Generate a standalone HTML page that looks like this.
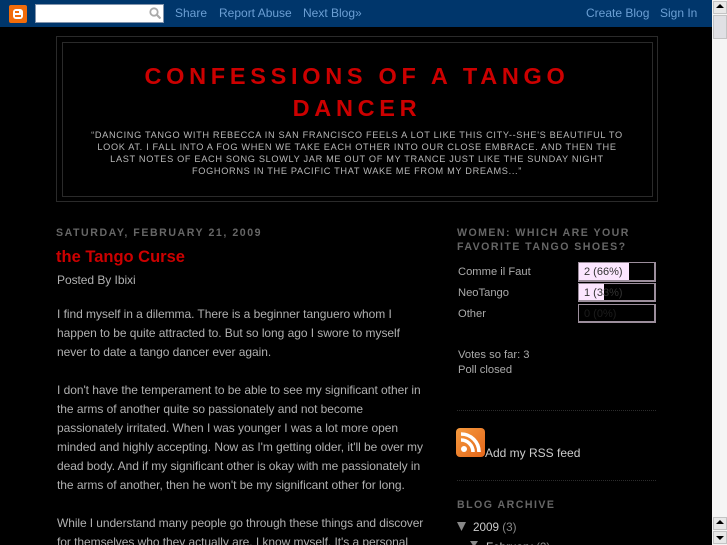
<!DOCTYPE html>
<html><head><meta charset="utf-8">
<style>
html,body{margin:0;padding:0;background:#000;overflow:hidden}
#p{position:relative;width:727px;height:545px;overflow:hidden;background:#000;font-family:"Liberation Sans",sans-serif}
#p div,#p svg{position:absolute}
.t{white-space:nowrap}
.nav{top:6px;font-size:12px;line-height:15px;color:#6b9fd4;letter-spacing:0}
.b{font-size:12px;color:#b0b0b0;left:57px;letter-spacing:-.05px;line-height:19px}
.h{font-weight:bold;font-size:10.6px;color:#666;letter-spacing:1.45px;line-height:14px}
.s{font-size:11.2px;color:#aaa;letter-spacing:0;line-height:15px}
.tag{font-size:9.2px;color:#b8b8b8;letter-spacing:.67px;line-height:12px;left:62px;width:590px;text-align:center}
.title{font-weight:bold;font-size:23.5px;color:#c00;letter-spacing:4.7px;line-height:32px;left:62px;width:590px;text-align:center}
.bar{left:578px;width:78px;height:19px;box-sizing:border-box;border:1px solid #9c8e9c;border-width:1px 2px 2px 1px;background:#000}
.fill{left:0;top:0;height:100%;background:#fce6ff}
.lab{left:5px;top:2px;font-size:11px;line-height:14px;letter-spacing:0;color:#333;white-space:nowrap}
.dot{left:457px;width:199px;height:1px;background:repeating-linear-gradient(90deg,#2c2c2c 0 1px,#000 1px 2px)}
</style></head><body><div id="p">
<div style="left:0;top:0;width:712px;height:27px;background:#00366b"></div>
<div style="left:9px;top:5px;width:18px;height:18px;background:#f26c0a;border-radius:2px"></div>
<div style="left:13px;top:9px;width:10px;height:10px;background:#fff;border-radius:3px"></div>
<div style="left:15px;top:11px;width:4px;height:2px;background:#f26c0a"></div>
<div style="left:15px;top:15px;width:6px;height:2px;background:#f26c0a"></div>
<div style="left:35px;top:4px;width:129px;height:19px;background:#fff;border:1px solid #8294ac;box-sizing:border-box"></div>
<svg style="left:149px;top:7px" width="12" height="12" viewBox="0 0 12 12"><circle cx="5" cy="5" r="3.700" fill="none" stroke="#aaa" stroke-width="1.800"/><path d="M8 8l3.500 3.500" stroke="#aaa" stroke-width="2.200"/></svg>
<div class="t nav" style="left:175px">Share</div>
<div class="t nav" style="left:219px">Report Abuse</div>
<div class="t nav" style="left:303px">Next Blog»</div>
<div class="t nav" style="left:586px">Create Blog</div>
<div class="t nav" style="left:660px">Sign In</div>

<div style="left:712px;top:0;width:15px;height:545px;background:#f5f5f5"></div>
<div style="left:713px;top:1px;width:14px;height:13px;background:#e8e8e8;border:1px solid #c4c4c4;box-sizing:border-box"></div>
<div style="left:713px;top:15px;width:14px;height:24px;background:#e0e0e4;border:1px solid #c4c4c4;box-sizing:border-box"></div>
<div style="left:713px;top:517px;width:14px;height:13px;background:#e8e8e8;border:1px solid #c4c4c4;box-sizing:border-box"></div>
<div style="left:713px;top:531px;width:14px;height:13px;background:#e8e8e8;border:1px solid #c4c4c4;box-sizing:border-box"></div>
<svg style="left:713px;top:0" width="14" height="545" viewBox="0 0 14 545"><path d="M3 8h8L7 4z M3 524h8L7 520z M3 536h8L7 540z" fill="#000"/></svg>

<div style="left:56px;top:36px;width:602px;height:166px;box-sizing:border-box;border:1px solid #2a2a2a"></div>
<div style="left:62px;top:42px;width:591px;height:155px;box-sizing:border-box;border:1px solid #2a2a2a"></div>
<div class="t title" style="top:60px">CONFESSIONS OF A TANGO</div>
<div class="t title" style="top:92px">DANCER</div>
<div class="t tag" style="top:129px">“DANCING TANGO WITH REBECCA IN SAN FRANCISCO FEELS A LOT LIKE THIS CITY--SHE'S BEAUTIFUL TO</div>
<div class="t tag" style="top:141px">LOOK AT. I FALL INTO A FOG WHEN WE TAKE EACH OTHER INTO OUR CLOSE EMBRACE. AND THEN THE</div>
<div class="t tag" style="top:153px">LAST NOTES OF EACH SONG SLOWLY JAR ME OUT OF MY TRANCE JUST LIKE THE SUNDAY NIGHT</div>
<div class="t tag" style="top:165px">FOGHORNS IN THE PACIFIC THAT WAKE ME FROM MY DREAMS...”</div>

<div class="t h" style="left:56px;top:226px;letter-spacing:1.55px">SATURDAY, FEBRUARY 21, 2009</div>
<div class="t" style="left:56px;top:247px;font-size:16.5px;font-weight:bold;color:#c00;line-height:20px">the Tango Curse</div>
<div class="t b" style="top:271px">Posted By Ibixi</div>
<div class="t b" style="top:305px">I find myself in a dilemma. There is a beginner tanguero whom I</div>
<div class="t b" style="top:324px">happen to be quite attracted to. But so long ago I swore to myself</div>
<div class="t b" style="top:343px">never to date a tango dancer ever again.</div>
<div class="t b" style="top:381px">I don't have the temperament to be able to see my significant other in</div>
<div class="t b" style="top:400px">the arms of another quite so passionately and not become</div>
<div class="t b" style="top:419px">passionately irritated. When I was younger I was a lot more open</div>
<div class="t b" style="top:438px">minded and highly accepting. Now as I'm getting older, it'll be over my</div>
<div class="t b" style="top:457px">dead body. And if my significant other is okay with me passionately in</div>
<div class="t b" style="top:476px">the arms of another, then he won't be my significant other for long.</div>
<div class="t b" style="top:514px;letter-spacing:-.09px">While I understand many people go through these things and discover</div>
<div class="t b" style="top:533px">for themselves who they actually are. I know myself. It's a personal</div>

<div class="t h" style="left:457px;top:226px">WOMEN: WHICH ARE YOUR</div>
<div class="t h" style="left:457px;top:240px">FAVORITE TANGO SHOES?</div>
<div class="t s" style="left:458px;top:265px">Comme il Faut</div>
<div class="t s" style="left:458px;top:286px">NeoTango</div>
<div class="t s" style="left:458px;top:307px">Other</div>
<div class="bar" style="top:262px;height:20px"><div class="fill" style="width:50px"></div><div class="lab">2 (66%)</div></div>
<div class="bar" style="top:283px"><div class="fill" style="width:25px"></div><div class="lab">1 (33%)</div></div>
<div class="bar" style="top:304px"><div class="lab" style="color:#1c1c1c">0 (0%)</div></div>
<div class="t s" style="left:458px;top:348px">Votes so far: 3</div>
<div class="t s" style="left:458px;top:363px">Poll closed</div>
<div class="dot" style="top:410px"></div>
<svg style="left:456px;top:428px" width="30" height="30" viewBox="0 0 30 30"><defs><linearGradient id="g" x1="0" y1="0" x2="1" y2="1"><stop offset="0" stop-color="#f59a3f"/><stop offset="1" stop-color="#e4661a"/></linearGradient></defs><rect width="29" height="29" rx="4" fill="url(#g)"/><circle cx="8" cy="21" r="3" fill="#fff"/><path d="M5 12a12 12 0 0 1 12 12M5 6a18 18 0 0 1 18 18" fill="none" stroke="#fff" stroke-width="3.600"/></svg>
<div class="t s" style="left:485px;top:446px;color:#ccc;font-size:12px">Add my RSS feed</div>
<div class="dot" style="top:480px"></div>
<div class="t h" style="left:457px;top:498px;letter-spacing:1.470px">BLOG ARCHIVE</div>
<svg style="left:456px;top:521px" width="12" height="12"><path d="M1 1h9l-4.500 9z" fill="#888"/></svg>
<div class="t s" style="left:473px;top:520px;color:#ccc;font-size:11.700px">2009 <span style="color:#888">(3)</span></div>
<svg style="left:470px;top:540px" width="10" height="6"><path d="M0 1h8l-4 6z" fill="#888"/></svg>
<div class="t s" style="left:486px;top:540px;color:#ccc;font-size:11.700px">February <span style="color:#888">(2)</span></div>
</div></body></html>
